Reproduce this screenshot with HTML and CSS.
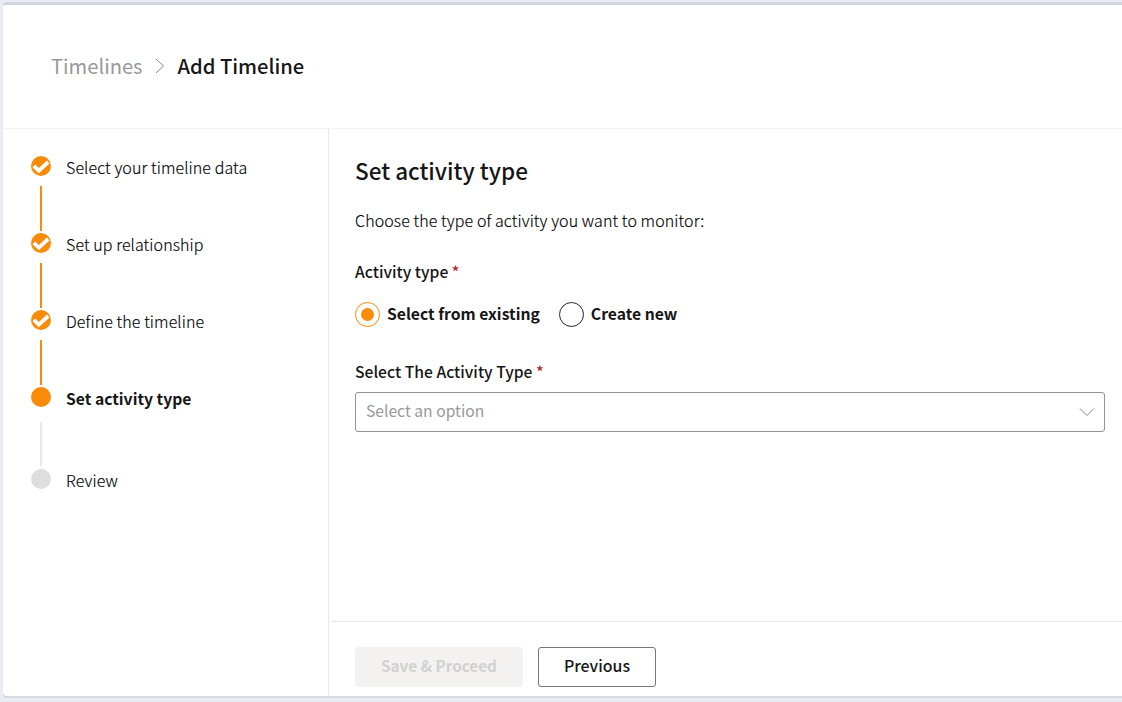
FILE: index.html
```
<!DOCTYPE html>
<html lang="en">
<head>
<meta charset="utf-8">
<title>Add Timeline</title>
<link rel="stylesheet" href="styles.css">
</head>
<body>
<div class="card">
  <header class="header">
    <a class="crumb">Timelines</a>
    <svg class="crumb-arrow" width="10" height="16" viewBox="0 0 10 16"><path d="M1 1L8.5 8L1 15" fill="none" stroke="#888" stroke-width="1"/></svg>
    <span class="crumb-current">Add Timeline</span>
  </header>
  <div class="body">
    <nav class="steps">
      <div class="step done"><div class="track"><svg class="dot" viewBox="0 0 20 20"><circle cx="10" cy="10" r="10"/><path class="tick" d="M2.8 9.8L7.8 14.6L17.2 6"/></svg><i class="line"></i></div><span class="label">Select your timeline data</span></div>
      <div class="step done"><div class="track"><svg class="dot" viewBox="0 0 20 20"><circle cx="10" cy="10" r="10"/><path class="tick" d="M2.8 9.8L7.8 14.6L17.2 6"/></svg><i class="line"></i></div><span class="label">Set up relationship</span></div>
      <div class="step done"><div class="track"><svg class="dot" viewBox="0 0 20 20"><circle cx="10" cy="10" r="10"/><path class="tick" d="M2.8 9.8L7.8 14.6L17.2 6"/></svg><i class="line"></i></div><span class="label">Define the timeline</span></div>
      <div class="step current"><div class="track"><svg class="dot" viewBox="0 0 20 20"><circle cx="10" cy="10" r="10"/></svg><i class="line"></i></div><span class="label">Set activity type</span></div>
      <div class="step pending"><div class="track"><svg class="dot" viewBox="0 0 20 20"><circle cx="10" cy="10" r="10"/></svg></div><span class="label">Review</span></div>
    </nav>
    <main class="main">
      <section class="content">
        <h1 class="title">Set activity type</h1>
        <p class="intro">Choose the type of activity you want to monitor:</p>
        <div class="field-label">Activity type <span class="required">*</span></div>
        <div class="radios">
          <span class="radio checked"></span><span class="radio-label">Select from existing</span>
          <span class="radio second"></span><span class="radio-label">Create new</span>
        </div>
        <div class="field-label select-label">Select The Activity Type <span class="required">*</span></div>
        <div class="select"><span class="placeholder">Select an option</span>
          <svg width="16" height="10" viewBox="0 0 16 10"><path d="M1 1.5L8 8.5L15 1.5" fill="none" stroke="#8c8c8c" stroke-width="1"/></svg>
        </div>
      </section>
      <footer class="footer">
        <button class="button save" disabled>Save &amp; Proceed</button>
        <button class="button previous">Previous</button>
      </footer>
    </main>
  </div>
</div>
</body>
</html>
```
FILE: styles.css
```
* { box-sizing: border-box; }
body {
  margin: 0;
  height: 702px;
  overflow: hidden;
  padding: 2px 0 6px 3px;
  background: #e9edf3;
  color: #161616;
  font: 400 16px/24px "Noto Sans CJK SC", "Open Sans", sans-serif;
}
.card {
  height: 694px;
  display: flex;
  flex-direction: column;
  background: #fff;
  border-top: 3px solid #d1d5df;
  border-radius: 4px 0 0 4px;
  box-shadow: 0 2px 0 #d5d9df;
}
.header {
  height: 124px;
  flex: none;
  display: flex;
  align-items: center;
  padding: 0 0 1px 48px;
  border-bottom: 1px solid #f2f2f2;
  font-size: 20.15px;
}
.crumb { color: #999; width: 92px; white-space: nowrap; }
.crumb-arrow { margin: 0 12.5px 0 12px; }
.crumb-current { font-weight: 500; white-space: nowrap; }
.crumb, .crumb-current { padding-bottom: 1px; }
.body { flex: 1; display: flex; min-height: 0; }
.steps { width: 326px; border-right: 1px solid #e8e8e8; padding: 27px 0 0 28px; }
.step { display: flex; height: 77px; gap: 15px; font-weight: 300; color: #000; letter-spacing: 0.1px; -webkit-text-stroke: 0.15px #000; }
.label { line-height: 22px; }
.track { width: 20px; display: flex; flex-direction: column; align-items: center; }
.dot { width: 20px; height: 20px; flex: none; fill: #f98b08; }
.tick { fill: none; stroke: #fff; stroke-width: 3.8; }
.line { width: 2px; height: 45px; margin-top: 10px; background: #f98b08; }
.current { height: 82px; font-weight: 700; font-size: 15.7px; letter-spacing: 0; color: #161616; -webkit-text-stroke: 0; }
.current .label { line-height: 24px; }
.current .line { margin-top: 15px; height: 44px; background: #e8e8e8; }
.pending .dot { fill: #dedede; }
.main { flex: 1; display: flex; flex-direction: column; padding-left: 2px; }
.content { flex: 1; padding: 25px 17px 0 24px; }
.title { margin: 0; font-size: 22.5px; line-height: 32px; font-weight: 500; }
.intro { margin: 21px 0 0; font-weight: 300; line-height: 26px; color: #000; letter-spacing: 0.1px; -webkit-text-stroke: 0.15px #000; }
.field-label { margin-top: 27px; font-weight: 500; line-height: 24px; font-size: 15.7px; }
.required { color: #b3261e; }
.radios { display: flex; align-items: center; margin-top: 17px; height: 26px; font-weight: 700; font-size: 15.7px; }
.radio { width: 25px; height: 25px; border: 1px solid #262626; border-radius: 50%; display: grid; place-items: center; margin-right: 7px; }
.checked { border-color: #f98b08; }
.checked::after { content: ""; width: 13px; height: 13px; border-radius: 50%; background: #f98b08; }
.second { margin-left: 19px; }
.select-label { margin-top: 33px; }
.select { height: 40px; margin-top: 8px; border: 1px solid #949494; border-radius: 3px; display: flex; align-items: center; justify-content: space-between; padding: 0 9px 0 10px; color: #999; font-size: 15.65px; }
.placeholder { padding-bottom: 2px; }
.footer { height: 75px; display: flex; gap: 15px; padding: 25px 0 0 24px; border-top: 1px solid #e8e8e8; }
.button { height: 40px; border: 1px solid #777; border-radius: 3px; padding: 0 0 3px; background: #fff; color: #161616; font: 500 15.9px/24px "Noto Sans CJK SC", "Open Sans", sans-serif; }
.save { width: 168px; background: #f3f2f1; border-color: #f3f2f1; color: #d1d1d1; font-weight: 700; font-size: 15.3px; padding-bottom: 4px; }
.previous { width: 118px; }
```
